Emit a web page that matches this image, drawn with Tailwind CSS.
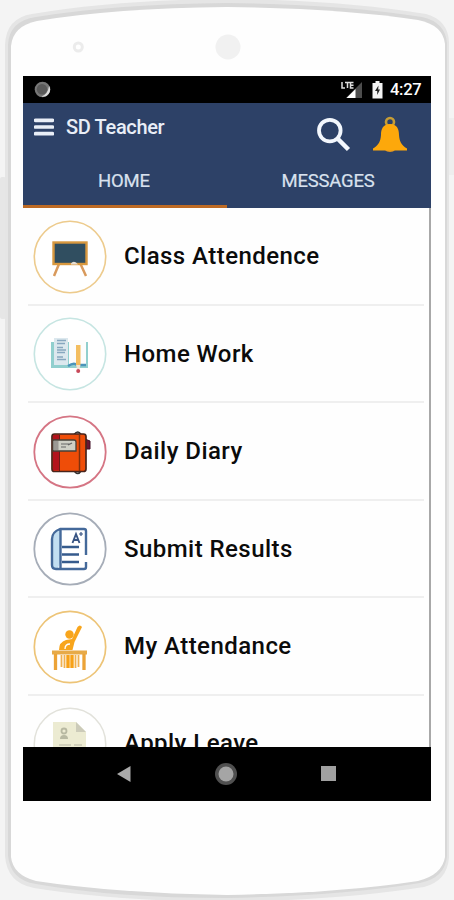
<!DOCTYPE html>
<html lang="en">
<head>
<meta charset="utf-8">
<meta name="viewport" content="width=device-width, initial-scale=1">
<title>SD Teacher</title>
<script src="https://cdn.jsdelivr.net/npm/@tailwindcss/browser@4"></script>
</head>
<body class="bg-[#f4f4f4] font-['Roboto',sans-serif] overflow-hidden">
<div class="relative w-[454px] h-[900px] overflow-hidden">
  <!-- phone shell -->
  <svg class="absolute inset-0" width="454" height="900" viewBox="0 0 454 900">
    <rect x="0" y="177" width="6" height="142" rx="2" fill="#e6e6e6"/>
    <rect x="449" y="118" width="5" height="57" fill="#eeeeee"/>
    <path d="M5 45Q6 18 32 14Q115 0 227 -1Q340 0 426 14Q448 20 449 42V858Q447 881 424 887Q340 900 227 902Q115 901 34 888Q7 883 5 856Z" fill="#e5e5e5"/>
    <path d="M8 45Q9 21 36 17Q115 4 227 3Q340 4 422 17Q445 22 447 43V856Q445 878 420 883Q340 896 227 898Q115 898 36 884Q10 880 8 855Z" fill="#d8d8d8"/>
    <path d="M11 46Q13 26 37 21Q115 8 227 7Q340 8 418 20Q443 25 445 44V857Q442 875 418 881Q340 893 227 895Q115 893 36 881Q13 875 11 857Z" fill="#fefefe"/>
    <circle cx="78.300" cy="47" r="4" fill="#fff" stroke="#ececec" stroke-width="3"/>
    <circle cx="228" cy="47" r="12.500" fill="#f1f1f1"/>
  </svg>

  <div class="relative ml-[23px] pt-[76px] w-[408px] flex flex-col">
    <!-- status bar -->
    <div class="h-[27px] bg-black flex items-center pl-[11px] pr-[10px] text-white">
      <svg width="17" height="17" viewBox="0 0 17 17"><circle cx="8.500" cy="8.500" r="7.800" fill="#777"/><path d="M15 5a7 7 0 0 1-7.500 10.500q6.500-2.500 7.500-10.500" fill="#ddd"/><circle cx="8" cy="8.200" r="5.200" fill="#5a5a5a"/></svg>
      <svg class="ml-auto mr-[9px]" width="22" height="18" viewBox="0 0 22 18"><path d="M21 1V17H5Z" fill="#4d4d4d"/><path d="M14.500 8v9H5.500Z" fill="#fff"/><path d="M1 1v6h3M4 1.500h5M6.500 1.500V7M12.500 1.500H9.500V7h3M9.500 4.200h3" fill="none" stroke="#ddd" stroke-width="1.500"/></svg>
      <svg class="mr-[7px]" width="11" height="18" viewBox="0 0 11 18"><path d="M3.500 0h4v2h3v15.500H.5V2h3Z" fill="#f4f4f4"/><path d="M6.500 4.500L3 10h2.200v4L8 8.500H6.200Z" fill="#222"/></svg>
      <span class="text-[16.500px] leading-[20px] font-medium w-[31px] whitespace-nowrap tracking-[-0.300px] pt-[1px]">4:27</span>
    </div>
    <!-- app bar -->
    <header class="h-[105px] bg-[#2d4167] text-[#e9eef7] flex flex-col">
      <div class="h-[59px] flex items-start pl-[11px] pr-[23px]">
        <svg class="mt-[14px]" width="20" height="20" viewBox="0 0 20 20"><path d="M1.500 3.300H18.500M1.500 10H18.500M1.500 16.700H18.500" stroke="#e9eef7" stroke-width="3.700" stroke-linecap="round"/></svg>
        <h1 class="ml-[12px] mt-[11px] text-[20px] leading-[26px] font-medium whitespace-nowrap tracking-[-0.350px]">SD Teacher</h1>
        <svg class="ml-auto mt-[13px] mr-[21px]" width="36" height="36" viewBox="0 0 36 36"><circle cx="14.800" cy="14.600" r="10.800" fill="none" stroke="#f3f7fd" stroke-width="3.800"/><path d="M22.500 22.500L33.500 33.500" stroke="#f3f7fd" stroke-width="4.500"/></svg>
        <svg class="mt-[13px]" width="36" height="37" viewBox="0 0 36 37"><circle cx="18" cy="6" r="4" fill="none" stroke="#c79d35" stroke-width="2.600"/><path d="M13 34a5.500 3.300 0 0 0 10 0Z" fill="#df9522"/><path d="M18 8C11 8 9 13 9 19C8.500 25 7 29 1 32.500V34.500H35V32.500C29 29 27.500 25 27 19C27 13 25 8 18 8Z" fill="#fda80b"/></svg>
      </div>
      <nav class="flex-1 grid grid-cols-2 text-[18.500px] leading-[38px] text-center text-[#d9e1ee]">
        <a class="border-b-[3px] border-[#bd6a24] pr-[2px] tracking-[-0.200px] [-webkit-text-stroke:0.200px]">HOME</a>
        <a class="pr-[2px] tracking-[-0.200px] [-webkit-text-stroke:0.200px]">MESSAGES</a>
      </nav>
    </header>
    <!-- menu -->
    <main class="h-[539px] bg-[#fefefe] overflow-hidden border-r-[2px] border-[#a8a8a8] pl-[5px] pr-[5px] text-[24px] font-medium tracking-[0.450px] text-[#0b0b0b]">
      <div class="h-[97.500px] flex items-center border-b-[2px] border-[#efefef] pl-[5px]">
        <svg class="shrink-0 mt-[2px]" width="74" height="74" viewBox="0 0 74 74"><circle cx="37" cy="37" r="35.700" fill="#fff" stroke="#edcb8d" stroke-width="1.600"/><path d="M26 44L21 56M47.500 44L53 56" stroke="#d99a5c" stroke-width="2.500"/><rect x="20.500" y="22.500" width="33" height="21.500" fill="#304e60" stroke="#d8983f" stroke-width="2.400"/><path d="M38 43.500q2-3 5-1l2 2h-7Z" fill="#e5ded5"/></svg>
        <span class="ml-[17px] pt-[1px] whitespace-nowrap">Class Attendence</span>
      </div>
      <div class="h-[97.500px] flex items-center border-b-[2px] border-[#efefef] pl-[5px]">
        <svg class="shrink-0 mt-[2px]" width="74" height="74" viewBox="0 0 74 74"><circle cx="37" cy="37" r="35.700" fill="#fff" stroke="#c6e5e2" stroke-width="1.600"/><path d="M18 25H55V51H18Z" fill="#91cfce"/><path d="M21 21H35V48H21Z" fill="#dce8ee"/><path d="M36 23H53V48H36Z" fill="#fcfcfc"/><path d="M24 23.500h9M24 26.500h8M24 30.500h6M24 33h9M24 35.500h8M24 40h6M24 42.500h9" stroke="#87a7bf" stroke-width="1.500"/><path d="M35 49q6-4 9-1h9" fill="none" stroke="#4b94ba" stroke-width="2.500"/><path d="M43 28h4.500v20h-4.500Z" fill="#f3bd5f"/><path d="M43 48h4.500l-1 4h-2.500Z" fill="#eee2cf"/><circle cx="45.200" cy="54" r="2" fill="#c84859"/></svg>
        <span class="ml-[17px] pt-[1px] whitespace-nowrap">Home Work</span>
      </div>
      <div class="h-[97.500px] flex items-center border-b-[2px] border-[#efefef] pl-[5px]">
        <svg class="shrink-0 mt-[2px]" width="74" height="74" viewBox="0 0 74 74"><circle cx="37" cy="37" r="35.700" fill="#fff" stroke="#d57584" stroke-width="1.800"/><path d="M41 19.500q4-5 7 0M41 56q4 5 7 0" fill="#bbb" stroke="#333" stroke-width="1.500"/><path d="M52 24l5 2v8h-5Z" fill="#6b1634" stroke="#421126" stroke-width="1"/><rect x="19" y="19" width="34" height="37.500" rx="2.500" fill="#ef4d08" stroke="#49251c" stroke-width="1.700"/><path d="M20 20h6v35.500h-6Z" fill="#b3131c"/><path d="M26.500 20v36" stroke="#6d1b17" stroke-width="1"/><path d="M20 25h21q2 0 2 2v9H20Z" fill="#cfd0c6" stroke="#464039" stroke-width="1.300"/><path d="M20.500 26h5v9h-5Z" fill="#9b9893"/><path d="M28 29h9M28 32h5M35 30l4-2" stroke="#666" stroke-width="1.200"/><path d="M46.500 20v36" stroke="#81300c" stroke-width="1.500"/></svg>
        <span class="ml-[17px] pt-[1px] whitespace-nowrap">Daily Diary</span>
      </div>
      <div class="h-[97.500px] flex items-center border-b-[2px] border-[#efefef] pl-[5px]">
        <svg class="shrink-0 mt-[2px]" width="74" height="74" viewBox="0 0 74 74"><circle cx="37" cy="37" r="35.700" fill="#fff" stroke="#a6adb8" stroke-width="1.800"/><path d="M19 24l6-6h2v33l-2 5q-6 2-6-4Z" fill="#c2def1"/><path d="M53 43V19q0-2-2-2H27q-8 3-8 10v26q0 4 4 4h28q2 0 2-2v-5M27.500 18v39" fill="none" stroke="#44699a" stroke-width="2.400" stroke-linejoin="round"/><path d="M29 35h17M29 42.500h17M29 50h17" stroke="#365b8d" stroke-width="2.300"/><path d="M39.500 31l3.500-9 3.500 9M41 28h4" fill="none" stroke="#385483" stroke-width="1.900"/><path d="M46 22h4M48 20v4" stroke="#385483" stroke-width="1.200"/></svg>
        <span class="ml-[17px] pt-[1px] whitespace-nowrap">Submit Results</span>
      </div>
      <div class="h-[97.500px] flex items-center border-b-[2px] border-[#efefef] pl-[5px]">
        <svg class="shrink-0 mt-[2px]" width="74" height="74" viewBox="0 0 74 74"><circle cx="37" cy="37" r="35.700" fill="#fff" stroke="#edc477" stroke-width="1.700"/><circle cx="36.500" cy="24.500" r="4.200" fill="#f8a51c"/><path d="M26 40q0-8 7-10l6-1 5.500-12q2.500-3 4.500 0l-7.500 15-2 8Z" fill="#f8a51c"/><path d="M32 39q0-5 5-5" fill="none" stroke="#fff" stroke-width="1.300"/><rect x="19" y="40.500" width="35" height="4" fill="#e7aa48"/><path d="M22.500 44v16M51 44v16" stroke="#eca337" stroke-width="3.300"/><path d="M28.500 45v12M31.500 45v13M42.500 45v13M45.500 45v12" stroke="#f0b151" stroke-width="1.800"/><path d="M35 45v13M39 45v13" stroke="#f7a117" stroke-width="3.400"/></svg>
        <span class="ml-[17px] pt-[1px] whitespace-nowrap">My Attendance</span>
      </div>
      <div class="h-[97.500px] flex items-center border-b-[2px] border-[#efefef] pl-[5px]">
        <svg class="shrink-0 mt-[2px]" width="74" height="74" viewBox="0 0 74 74"><circle cx="37" cy="37" r="35.700" fill="#fff" stroke="#e2e2db" stroke-width="1.500"/><path d="M20 15H43L53 25V59H20Z" fill="#ecebd2"/><path d="M43 15V25H53Z" fill="#cccbb9"/><circle cx="31" cy="24" r="2.500" fill="none" stroke="#b8b9a2" stroke-width="1.800"/><path d="M27 32q0-4 4-4t4 4Z" fill="#b8b9a2"/><path d="M26 38h12M41 38h8" stroke="#c7c7b4" stroke-width="1.500"/></svg>
        <span class="ml-[17px] whitespace-nowrap">Apply Leave</span>
      </div>
    </main>
    <!-- system navigation -->
    <div class="h-[53.500px] bg-black flex items-center pl-[93px]">
      <svg width="16" height="18" viewBox="0 0 16 18"><path d="M1 9L14.500 1V17Z" fill="#aaa"/></svg>
      <svg class="ml-[82px]" width="24" height="24" viewBox="0 0 24 24"><circle cx="12" cy="12" r="11" fill="#505050"/><circle cx="12" cy="12" r="7.500" fill="#a5a5a5"/></svg>
      <div class="ml-[83px] w-[15px] h-[15px] bg-[#a0a0a0]"></div>
    </div>
  </div>
</div>
</body>
</html>
